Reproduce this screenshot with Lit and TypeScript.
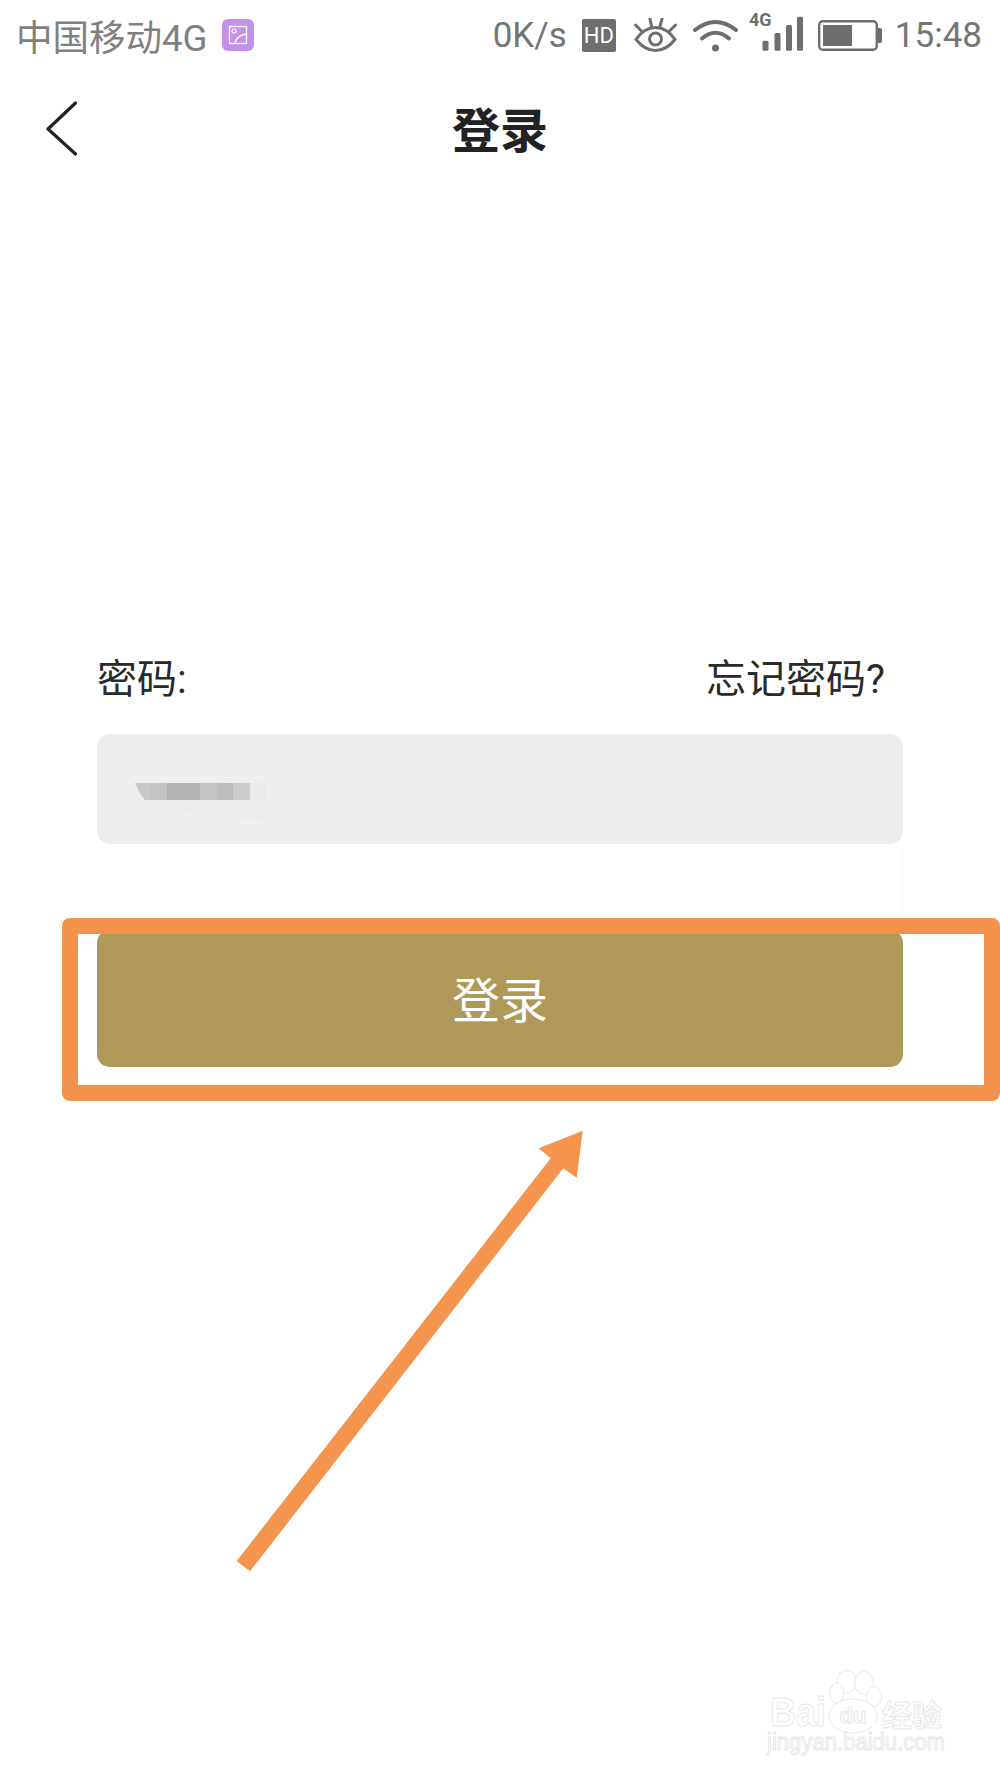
import { css, html, svg, LitElement } from "lit";
import { customElement } from "lit/decorators.js";

const mosaic = [
  { x: 150, w: 17, c: "#c4c4c4" },
  { x: 167, w: 33, c: "#b3b3b1" },
  { x: 200, w: 17, c: "#c3c3c3" },
  { x: 217, w: 16, c: "#bcbcbc" },
  { x: 233, w: 17, c: "#cdcdcd" },
  { x: 250, w: 16, c: "#e9e9e9" },
];

@customElement("app-root")
export class AppRoot extends LitElement {
  renderStatusBar() {
    return html`<div class="status">
      <span class="carrier">中国移动4G</span>
      <svg class="album" width="32" height="32" viewBox="0 0 32 32">
        <rect width="32" height="32" rx="6" fill="#c491ea" />
        <rect x="7.5" y="7.5" width="17" height="17" fill="none" stroke="#fff" stroke-width="1.3" />
        <circle cx="12" cy="12" r="2" fill="none" stroke="#fff" stroke-width="1.1" />
        <path d="M13 24c1-5 5-8 11-9" fill="none" stroke="#fff" stroke-width="1.3" />
      </svg>
      <span class="spacer"></span>
      <span class="speed">0K/s</span>
      <span class="hd">HD</span>
      <svg class="eye" width="43" height="34" viewBox="0 0 43 34" fill="none" stroke="#6e6e6e" stroke-width="3" stroke-linecap="round">
        <path d="M2 21.500C8 12.500 14 9.500 21.500 9.500S35 12.500 41 21.500C35 29 29 32.500 21.500 32.500S8 29 2 21.500Z" />
        <circle cx="21.500" cy="21" r="6" />
        <path d="M16 1l1.500 7M28 1l-2 7M1.500 7l6 6M41.500 7l-6 6" />
      </svg>
      <svg class="wifi" width="45" height="34" viewBox="0 0 45 34" fill="none" stroke="#6e6e6e" stroke-width="4" stroke-linecap="round">
        <path d="M2 12Q22.500-4 43 12" />
        <path d="M9 20.500Q22.500 9 36 20.500" />
        <circle cx="22.500" cy="30" r="3.500" fill="#6e6e6e" stroke="none" />
      </svg>
      <svg class="signal" width="54" height="56" viewBox="0 -5 54 56">
        <text x="0" y="13.500" class="net">4G</text>
        <rect x="13.500" y="28.700" width="6" height="10" rx="1.500" fill="#6e6e6e" />
        <rect x="25.500" y="21" width="6" height="17.700" rx="1.500" fill="#6e6e6e" />
        <rect x="37" y="13" width="6" height="25.700" rx="1.500" fill="#6e6e6e" />
        <rect x="48" y="4.700" width="6" height="34" rx="1.500" fill="#6e6e6e" />
      </svg>
      <svg class="battery" width="64" height="31" viewBox="0 0 64 31">
        <rect x="1.200" y="1.200" width="57.600" height="28.600" rx="3.500" fill="none" stroke="#6e6e6e" stroke-width="2.400" />
        <rect x="5" y="5" width="29" height="21" fill="#6e6e6e" />
        <path d="M60 8h2a2 2 0 0 1 2 2v11a2 2 0 0 1-2 2h-2z" fill="#6e6e6e" />
      </svg>
      <span class="time">15:48</span>
    </div>`;
  }

  renderHeader() {
    return html`<header class="header">
      <svg class="back" width="32" height="56" viewBox="0 0 32 56" fill="none" stroke="#222" stroke-width="3.200" stroke-linecap="round" stroke-linejoin="round">
        <path d="M29.500 2L2 28l27.500 25" />
      </svg>
      <h1 class="title">登录</h1>
    </header>`;
  }

  renderForm() {
    return html`<section class="form">
      <div class="labels">
        <span>密码:</span>
        <span>忘记密码?</span>
      </div>
      <div class="input">
        <svg class="smudge" width="260" height="50" viewBox="135 780 260 50">
          <path d="M150 800c20 14 80 19 130 22h84c10 0 14-8 14-22z" fill="#ececec" />
          <path d="M266 783h112v17h-112z" fill="#ededed" />
          <path d="M135 783h15v17h-5c-4-4-7-10-10-17z" fill="#c9c9c9" />
          ${mosaic.map(
            (m) => svg`<rect x=${m.x} y="783" width=${m.w} height="17" fill=${m.c} />`
          )}
        </svg>
      </div>
      <div class="gap"></div>
      <button class="submit">登录</button>
    </section>`;
  }

  renderAnnotations() {
    return html`<div class="frame"></div>
      <svg class="arrow" width="1000" height="1778" viewBox="0 0 1000 1778">
        <polygon
          points="236.700,1561 250,1571.300 563.300,1168.300 576.700,1177.700 582.700,1130.700 538.700,1148.300 550.700,1158.300"
          fill="#f4944d"
        />
      </svg>
      <svg class="mark" width="200" height="110" viewBox="0 0 200 110">
        <g class="mark-glyphs">
          <ellipse cx="86.700" cy="21.700" rx="9.500" ry="11.500" />
          <ellipse cx="104" cy="23" rx="9.500" ry="11.500" />
          <ellipse cx="76.700" cy="33" rx="7" ry="10" />
          <ellipse cx="114" cy="36.700" rx="7.500" ry="10" />
          <ellipse cx="93" cy="56" rx="24" ry="17" />
          <text x="10" y="66" class="bai" textLength="56" lengthAdjust="spacingAndGlyphs">Bai</text>
          <text x="93" y="63" class="du" text-anchor="middle">du</text>
          <text x="122" y="66" class="jy">经验</text>
          <text x="7" y="90" class="url" textLength="178" lengthAdjust="spacingAndGlyphs">jingyan.baidu.com</text>
        </g>
      </svg>`;
  }

  render() {
    return html`<main class="page">
      ${this.renderStatusBar()} ${this.renderHeader()} ${this.renderForm()}
      ${this.renderAnnotations()}
    </main>`;
  }

  static styles = css`
    :host {
      display: block;
      width: 1000px;
      height: 1778px;
      background: #fff;
      font-family: Roboto, "Noto Sans CJK SC", sans-serif;
    }

    .page {
      position: relative;
      width: 1000px;
      height: 1778px;
      overflow: hidden;
    }

    .status {
      display: flex;
      align-items: center;
      height: 70px;
      padding: 0 18px 0 16px;
      box-sizing: border-box;
      color: #777;
    }

    .carrier {
      font-size: 36.500px;
      color: #808080;
    }

    .album {
      margin-left: 15px;
    }

    .spacer {
      flex: 1;
    }

    .speed,
    .time {
      font-size: 35px;
      color: #757575;
    }

    .hd {
      display: flex;
      align-items: center;
      justify-content: center;
      width: 34px;
      height: 33px;
      margin-left: 15px;
      border-radius: 2px;
      background: #6e6e6e;
      color: #fff;
      font-size: 22px;
    }

    .eye {
      margin-left: 18px;
    }

    .wifi {
      margin-left: 16px;
    }

    .signal {
      margin-left: 11px;
    }

    .net {
      font: bold 18px Roboto, sans-serif;
      fill: #6e6e6e;
    }

    .battery {
      margin-left: 15px;
    }

    .time {
      margin-left: 13px;
    }

    .header {
      display: flex;
      align-items: center;
      justify-content: center;
      position: relative;
      height: 120px;
      box-sizing: border-box;
      padding-bottom: 7px;
    }

    .back {
      position: absolute;
      left: 46px;
      top: 31px;
    }

    .title {
      margin: 0;
      font-size: 48px;
      font-weight: 700;
      color: #222;
    }

    .form {
      display: flex;
      flex-direction: column;
      margin-top: 463px;
      padding: 0 97px;
    }

    .labels {
      display: flex;
      justify-content: space-between;
      height: 50px;
      padding-right: 18px;
      font-size: 40px;
      line-height: 54px;
      color: #2a2a2a;
    }

    .input {
      height: 110px;
      margin-top: 31px;
      border-radius: 13px;
      background: #eeeeee;
    }

    .smudge {
      display: block;
      margin: 46px 0 0 38px;
    }

    .gap {
      height: 86px;
      border-right: 1px solid #f9f9f9;
    }

    .submit {
      height: 137px;
      padding: 0 0 3px;
      border: 0;
      border-radius: 13px;
      background: #af9959;
      color: #fff;
      font: 48px "Noto Sans CJK SC", sans-serif;
    }

    .frame {
      position: absolute;
      left: 62px;
      top: 918px;
      width: 938px;
      height: 183px;
      box-sizing: border-box;
      border: 16px solid #f2924c;
      border-radius: 8px;
    }

    .arrow {
      position: absolute;
      left: 0;
      top: 0;
      pointer-events: none;
    }

    .mark {
      position: absolute;
      left: 760px;
      top: 1660px;
    }

    .mark-glyphs {
      fill: #fff;
      stroke: #e8e8e8;
      stroke-width: 1;
    }

    .bai {
      font: 700 40px "Liberation Sans", sans-serif;
    }

    .du {
      font: 700 22px "Liberation Sans", sans-serif;
    }

    .jy {
      font: 700 30px "Noto Sans CJK SC", sans-serif;
    }

    .url {
      font: 400 23px "Liberation Sans", sans-serif;
    }
  `;
}

declare global {
  interface HTMLElementTagNameMap {
    "app-root": AppRoot;
  }
}
